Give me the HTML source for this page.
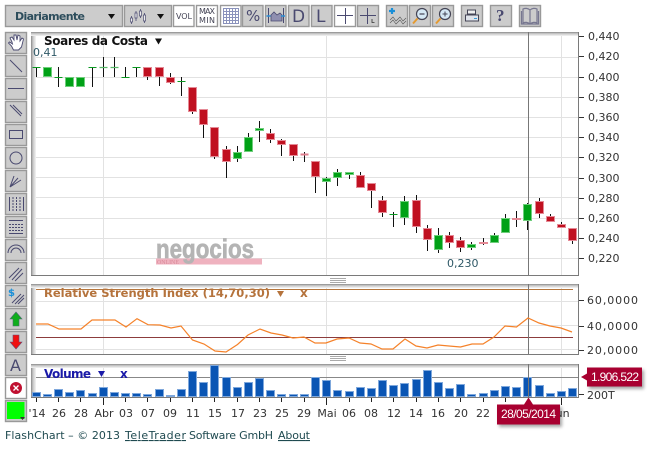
<!DOCTYPE html>
<html><head><meta charset="utf-8"><style>
html,body{margin:0;padding:0;background:#fff;width:650px;height:449px;overflow:hidden}
svg{display:block}
text{font-family:"DejaVu Sans","Liberation Sans",sans-serif;font-size:11px;fill:#333}
.b{fill:#ccc;stroke:#999;stroke-width:1.4}
.w{fill:#fff;stroke:#999;stroke-width:1.4}
.i{fill:none;stroke:#4a4a70;stroke-width:1}
</style></head><body>
<svg width="650" height="449" viewBox="0 0 650 449" xmlns="http://www.w3.org/2000/svg">
<defs>
<linearGradient id="gl" x1="0" x2="1" y1="0" y2="0"><stop offset="0" stop-color="#888"/><stop offset=".4" stop-color="#c8c8c8"/><stop offset="1" stop-color="#f4f4f4"/></linearGradient>
<linearGradient id="gt" x1="0" x2="0" y1="0" y2="1"><stop offset="0" stop-color="#888"/><stop offset=".4" stop-color="#c8c8c8"/><stop offset="1" stop-color="#f4f4f4"/></linearGradient>
<filter id="sh" x="-20%" y="-30%" width="140%" height="170%"><feGaussianBlur stdDeviation="1.5"/></filter>
</defs>

<!-- top toolbar -->
<rect class="b" x="5.500" y="5.500" width="117" height="21"/>
<text x="15" y="20" style="font-weight:bold;fill:#2d4d5c" textLength="70">Diariamente</text>
<path d="M108 14h7l-3.500 5z" fill="#111"/>
<rect class="b" x="124.500" y="5.500" width="47" height="21"/>
<path d="M131.500 16v8M136 11v10M140.500 9v9M144.500 13v10" stroke="#4a4a70" stroke-width=".8" fill="none"/>
<path d="M130.500 18h2v4h-2zM135 13h2v5h-2zM139.500 11h2v5h-2zM143.500 15h2v6h-2z" fill="#eee" stroke="#4a4a70" stroke-width=".7"/>
<path d="M157 14h7l-3.500 5z" fill="#111"/>
<rect class="w" x="173.500" y="5.500" width="20.500" height="21"/>
<text x="176" y="19" style="font-size:8px;fill:#445" textLength="16">VOL</text>
<rect class="w" x="196.500" y="5.500" width="21" height="21"/>
<text x="199" y="14" style="font-size:8px;fill:#445" textLength="16">MAX</text>
<text x="199" y="23" style="font-size:8px;fill:#445" textLength="16">MIN</text>
<rect class="w" x="220.500" y="5.500" width="20.500" height="21"/>
<path d="M223.500 8.500h15v15h-15zM226.500 8.500v15M229.500 8.500v15M232.500 8.500v15M235.500 8.500v15M223.500 11.500h15M223.500 14.500h15M223.500 17.500h15M223.500 20.500h15" fill="none" stroke="#8a92bc" stroke-width="1"/>
<rect class="b" x="242.500" y="5.500" width="20.500" height="21"/>
<text x="246" y="21" style="font-size:15px;fill:#4a4a70">%</text>
<rect class="b" x="265.500" y="5.500" width="20.500" height="21"/>
<path d="M271 21v-6l3 -3 3 3 3 -2 2 2v6z" fill="#8f8fb0" stroke="#4a4a70" stroke-width=".8"/>
<path d="M268.500 8v15M283.500 8v15" stroke="#4a4a70" stroke-width="1" fill="none"/>
<path d="M266.500 16h4M281 16h4" stroke="#2a8fd8" stroke-width="1.400" fill="none"/>
<rect class="b" x="288.500" y="5.500" width="20.500" height="21"/>
<text x="292" y="22" style="font-size:17px;fill:#4a4a70">D</text>
<rect class="b" x="311.500" y="5.500" width="20.500" height="21"/>
<text x="316" y="22" style="font-size:17px;fill:#4a4a70">L</text>
<rect class="w" x="334.500" y="5.500" width="21" height="21"/>
<path d="M345.500 8v16M337 15.500h16" stroke="#4a4a70" stroke-width="1" fill="none"/>
<rect class="b" x="357.500" y="5.500" width="21" height="21"/>
<path d="M367.500 8v16M360 15.500h16" stroke="#4a4a70" stroke-width="1" fill="none"/>
<path d="M372 19v3.500h2.500" stroke="#333" stroke-width=".8" fill="none"/>
<rect class="b" x="386.500" y="5.500" width="21" height="21"/>
<path d="M392 8v6M389 11h6" stroke="#1a8fd8" stroke-width="2.200" fill="none"/>
<path d="M390 20l3 -3 3 4 4 -4 3 4 3 -3M390 23l3 -3 3 4 4 -4 3 4 3 -3" stroke="#555" stroke-width=".6" fill="none"/>
<rect class="b" x="409.500" y="5.500" width="21" height="21"/>
<circle cx="422" cy="14" r="5.500" fill="#d5e8f5" stroke="#445" stroke-width="1.200"/>
<path d="M419.500 14h5" stroke="#445" stroke-width="1.200"/>
<path d="M417.500 18.500l-4.500 5" stroke="#e59a30" stroke-width="2"/>
<rect class="b" x="432.500" y="5.500" width="21" height="21"/>
<circle cx="445" cy="14" r="5.500" fill="#d5e8f5" stroke="#445" stroke-width="1.200"/>
<path d="M442.500 14h5M445 11.500v5" stroke="#445" stroke-width="1"/>
<path d="M440.500 18.500l-4.500 5" stroke="#e59a30" stroke-width="2"/>
<rect class="b" x="461.500" y="5.500" width="21" height="21"/>
<path d="M467.500 10h8v4h-8z" fill="#eee" stroke="#445"/>
<path d="M465.500 15h13v6h-13z" fill="#dfe3ea" stroke="#445"/>
<path d="M474 18.500h3" stroke="#3a9bd8" stroke-width="1"/>
<rect class="b" x="490.500" y="5.500" width="21" height="21"/>
<text x="496" y="21" style="font-family:'Liberation Serif',serif;font-size:17px;font-weight:bold;fill:#4a4a70">?</text>
<rect class="b" x="519.500" y="5.500" width="21" height="21"/>
<path d="M523 9c2 -1 5 -1 7 1c2 -2 5 -2 7 -1v14c-2 -1 -5 -1 -7 1c-2 -2 -5 -2 -7 -1zM530 10v14M521.500 11v13h17v-13" fill="none" stroke="#777790" stroke-width="1.200"/>

<!-- left toolbar -->
<rect class="b" x="5.500" y="32.500" width="21" height="21"/>
<path d="M12 42l-2 -4 2 -1 2 3 0 -5 2 0 1 5 1 -5 2 1 0 5 2 -3 1.500 1 -2 8 -3 3h-5l-2 -4 -3 -3 1 -1 3 2z" fill="#fff" stroke="#4a4a70" stroke-width=".9"/>
<rect class="b" x="5.500" y="55.500" width="21" height="21"/>
<path class="i" d="M10 60l12 12"/>
<rect class="b" x="5.500" y="78.500" width="21" height="21"/>
<path class="i" d="M8 88.500h16"/>
<rect class="b" x="5.500" y="101.500" width="21" height="21"/>
<path class="i" d="M10 105l11 11M13 105l9 9"/>
<rect class="b" x="5.500" y="124.500" width="21" height="21"/>
<path class="i" d="M9.500 130.500h13v8h-13z" stroke-width="1"/>
<rect class="b" x="5.500" y="147.500" width="21" height="21"/>
<circle class="i" cx="16" cy="158" r="6"/>
<rect class="b" x="5.500" y="170.500" width="21" height="21"/>
<path class="i" d="M10 187l4 -11M10 187l8 -9M10 187l11 -7" stroke-width="1.200"/>
<rect class="b" x="5.500" y="193.500" width="21" height="21"/>
<path class="i" d="M9.500 197v14M23.500 197v14"/>
<path class="i" d="M13 197v14M16.500 197v14M20 197v14" stroke-dasharray="2 1"/>
<rect class="b" x="5.500" y="216.500" width="21" height="21"/>
<path class="i" d="M9 220.500h14M9 233.500h14"/>
<path class="i" d="M9 224.500h14M9 227.500h14M9 230.500h14" stroke-dasharray="2 1"/>
<rect class="b" x="5.500" y="239.500" width="21" height="21"/>
<path class="i" d="M8 253a8 8 0 0 1 16 0M11 253a5 5 0 0 1 10 0"/>
<rect class="b" x="5.500" y="262.500" width="21" height="21"/>
<path class="i" d="M9 278l10 -10M12 280l10 -11M15 281l8 -8"/>
<rect class="b" x="5.500" y="285.500" width="21" height="21"/>
<text x="8" y="296" style="font-size:10px;font-weight:bold;fill:#1a8fd8">$</text>
<path class="i" d="M12 303l9 -9M15 304l9 -9M18 304l6 -6"/>
<rect class="b" x="5.500" y="308.500" width="21" height="21"/>
<path d="M16 312l6 7h-3v7h-6v-7h-3z" fill="#0fae1c" stroke="#4a6a70" stroke-width=".6"/>
<rect class="b" x="5.500" y="331.500" width="21" height="21"/>
<path d="M16 349l6 -7h-3v-7h-6v7h-3z" fill="#f01010" stroke="#6a4a70" stroke-width=".6"/>
<rect class="b" x="5.500" y="354.500" width="21" height="21"/>
<text x="10" y="371" style="font-size:16px;fill:#4a4a70">A</text>
<rect class="w" x="5.500" y="377.500" width="21" height="21"/>
<circle cx="16" cy="388" r="6" fill="#c01030"/>
<path d="M13.500 385.500l5 5M18.500 385.500l-5 5" stroke="#fff" stroke-width="1.400"/>
<rect class="b" x="5.500" y="400.500" width="21" height="21"/>
<rect x="7" y="402" width="17.500" height="17" fill="#00ff00"/>
<path d="M20 417h5l-2.500 3z" fill="#333"/>

<!-- main panel -->
<path d="M31 57.500H578M31 77.500H578M31 97.500H578M31 117.500H578M31 137.500H578M31 157.500H578M31 177.500H578M31 197.500H578M31 218.500H578M31 238.500H578M31 258.500H578M103.500 32V275M326.500 32V275M561.500 32V275" stroke="#e2e2e2" stroke-width="1" fill="none"/>
<rect x="31" y="32" width="5" height="243" fill="url(#gl)"/>
<rect x="31" y="32" width="547" height="4" fill="url(#gt)"/>
<path d="M31 275.500H578.500V32" stroke="#7a7a7a" stroke-width="1" fill="none"/>
<path d="M528.500 32V275" stroke="#777" fill="none"/>

<!-- logo -->
<rect x="156" y="258.500" width="106" height="6" fill="#efb2bf"/>
<text x="156" y="258" lengthAdjust="spacingAndGlyphs" textLength="98" style="font-family:'Liberation Sans',sans-serif;font-size:26.500px;font-weight:bold;fill:#b4b4b4;stroke:#b4b4b4;stroke-width:.7">negocios</text>
<text x="157" y="264" style="font-family:'Liberation Serif',serif;font-size:6px;fill:#d98a9a" textLength="22">ONLINE</text>

<!-- wicks -->
<path d="M36.500 67V77M58.500 67V87M92.500 67V87M103.500 57V77M114.500 57V77M125.500 67V77M136.500 67V77M147.500 67V80M159.500 67V86M170.500 73V84M181.500 77V96M192.500 87V114M203.500 109V138M214.500 127V159M226.500 146V178M237.500 146V162M248.500 133V152M259.500 121V142M270.500 129V143M281.500 139V156M293.500 144V161M304.500 152V162M315.500 161V193M326.500 177V196M337.500 169V186M349.500 172V179M360.500 172V188M371.500 183V208M382.500 196V217M393.500 212V227M404.500 196V225M416.500 195V233M427.500 225V251M438.500 228V253M449.500 232V248M460.500 237V252M471.500 242V250M483.500 238V245M494.500 233V243M505.500 214V233M516.500 211V227M527.500 203V230M539.500 198V218M550.500 214V222M561.500 222V228M572.500 228V244" stroke="#111" stroke-width="1" fill="none"/>
<!-- dojis -->
<path d="M32.500 67.500h8M54.500 77.500h8M88.500 67.500h8M121.500 77.500h8M132.500 67.500h8M177.500 81.500h8M389.500 214.500h8" stroke="#0a9a20" stroke-width="1" fill="none"/>
<path d="M99.500 67.500h8M110.500 67.500h8" stroke="#58b868" stroke-width="1.200" fill="none"/>
<path d="M300.500 154.500h8" stroke="#e07f8f" stroke-width="2" fill="none"/>
<!-- green bodies -->
<path d="M43.500 67.500h8v9h-8zM65.500 77.500h8v9h-8zM76.500 77.500h8v9h-8zM233.500 152.500h8v6h-8zM244.500 137.500h8v14h-8zM255.500 128.500h8v2h-8zM322.500 178.500h8v3h-8zM333.500 172.500h8v5h-8zM345.500 172.500h8v2h-8zM400.500 201.500h8v16h-8zM434.500 235.500h8v14h-8zM467.500 244.500h8v3h-8zM490.500 235.500h8v7h-8zM501.500 218.500h8v14h-8zM523.500 204.500h8v16h-8z" fill="#00a116" stroke="#6fce7c" stroke-width="1"/>
<!-- red bodies -->
<path d="M143.500 67.500h8v9h-8zM155.500 67.500h8v9h-8zM166.500 77.500h8v5h-8zM188.500 87.500h8v24h-8zM199.500 109.500h8v15h-8zM210.500 127.500h8v29h-8zM222.500 149.500h8v12h-8zM266.500 133.500h8v6h-8zM277.500 140.500h8v4h-8zM289.500 144.500h8v11h-8zM311.500 161.500h8v15h-8zM356.500 175.500h8v12h-8zM367.500 183.500h8v7h-8zM378.500 200.500h8v12h-8zM412.500 200.500h8v26h-8zM423.500 228.500h8v11h-8zM445.500 235.500h8v7h-8zM456.500 240.500h8v7h-8zM479.500 242.500h8v1h-8zM512.500 218.500h8v1h-8zM535.500 201.500h8v12h-8zM546.500 216.500h8v5h-8zM557.500 224.500h8v3h-8zM568.500 228.500h8v12h-8z" fill="#c01020" stroke="#e58a96" stroke-width="1"/>

<text x="44" y="45" style="font-size:12px;font-weight:bold;fill:#111" textLength="104">Soares da Costa</text>
<path d="M155 38.500h7l-3.500 6z" fill="#111"/>
<text x="33" y="56" style="fill:#2e5866;font-size:11px">0,41</text>
<text x="447" y="267" style="fill:#2e5866;font-size:11px">0,230</text>

<!-- right axis main -->
<path d="M579 36.500h5M579 56.500h5M579 77.500h5M579 97.500h5M579 117.500h5M579 137.500h5M579 157.500h5M579 178.500h5M579 198.500h5M579 218.500h5M579 238.500h5M579 258.500h5M579 300.500h5M579 326.500h5M579 350.500h5M579 394.500h5" stroke="#333" fill="none"/>
<text x="588" y="40">0,440</text><text x="588" y="60">0,420</text><text x="588" y="81">0,400</text><text x="588" y="101">0,380</text><text x="588" y="121">0,360</text><text x="588" y="141">0,340</text><text x="588" y="161">0,320</text><text x="588" y="182">0,300</text><text x="588" y="202">0,280</text><text x="588" y="222">0,260</text><text x="588" y="242">0,240</text><text x="588" y="262">0,220</text>

<!-- resize handles -->
<path d="M330 278.500h16M330 280.500h16M330 282.500h16M330 356.500h16M330 358.500h16M330 360.500h16" stroke="#aaa" fill="none"/>

<!-- RSI panel -->
<path d="M31 301.500H578M31 325.500H578M31 349.500H578M103.500 284V354M326.500 284V354M561.500 284V354" stroke="#e2e2e2" fill="none"/>
<rect x="31" y="284" width="5" height="70" fill="url(#gl)"/>
<rect x="31" y="284" width="547" height="4" fill="url(#gt)"/>
<path d="M31 354.500H578.500V284" stroke="#7a7a7a" fill="none"/>
<path d="M36 289.500H573" stroke="#b5763d" fill="none"/>
<path d="M36 337.500H573" stroke="#8c3c3c" fill="none"/>
<path d="M528.500 284V354" stroke="#777" fill="none"/>
<path d="M36 324L48 324 59 329 70 329 81 329 92 320 103.500 320 115 320 126 327 137 318.700 148 324.700 160 325 171 328 181 326 192.500 340 204 344 215 351 226 352 237.500 344.500 248 335 260 329 271 333 282 335 293 338 304 337 315 343 326 343 337 339 349 338 360 343 371 344 382 349 393 349 405 339 416 346 427 348 438 345 449 346 460.500 347 472 344 483 344 494 337 505 326 516.500 327 528 318 539 323 550 326 561 328 572 332" fill="none" stroke="#f5822a" stroke-width="1.200"/>
<text x="44" y="297" style="font-weight:bold;font-size:11.500px;fill:#b5733c" textLength="226">Relative Strength Index (14,70,30)</text>
<path d="M277 291h7l-3.500 6z" fill="#b5733c"/>
<text x="300" y="297" style="font-weight:bold;font-size:12px;fill:#b5733c">x</text>
<text x="587" y="304" textLength="51">60,0000</text><text x="587" y="330" textLength="51">40,0000</text><text x="587" y="354" textLength="51">20,0000</text>

<!-- Volume panel -->
<path d="M103.500 364V396M326.500 364V396M561.500 364V396" stroke="#e2e2e2" fill="none"/>
<rect x="31" y="364" width="5" height="33" fill="url(#gl)"/>
<rect x="31" y="364" width="547" height="4" fill="url(#gt)"/>
<path d="M36 377.500H578" stroke="#888" fill="none"/>
<path d="M32.500 392.500h8v4h-8zM43.500 394.500h8v2h-8zM54.500 389.500h8v7h-8zM65.500 392.500h8v4h-8zM76.500 390.500h8v6h-8zM88.500 393.500h8v3h-8zM99.500 387.500h8v9h-8zM110.500 392.500h8v4h-8zM121.500 393.500h8v3h-8zM132.500 393.500h8v3h-8zM143.500 394.500h8v2h-8zM155.500 389.500h8v7h-8zM166.500 395.500h8v1h-8zM177.500 389.500h8v7h-8zM188.500 371.500h8v25h-8zM199.500 382.500h8v14h-8zM210.500 365.500h8v31h-8zM222.500 377.500h8v19h-8zM233.500 387.500h8v9h-8zM244.500 382.500h8v14h-8zM255.500 378.500h8v18h-8zM266.500 390.500h8v6h-8zM277.500 394.500h8v2h-8zM289.500 394.500h8v2h-8zM300.500 394.500h8v2h-8zM311.500 377.500h8v19h-8zM322.500 380.500h8v16h-8zM333.500 390.500h8v6h-8zM345.500 391.500h8v5h-8zM356.500 387.500h8v9h-8zM367.500 388.500h8v8h-8zM378.500 380.500h8v16h-8zM389.500 385.500h8v11h-8zM400.500 383.500h8v13h-8zM412.500 379.500h8v17h-8zM423.500 370.500h8v26h-8zM434.500 382.500h8v14h-8zM445.500 388.500h8v8h-8zM456.500 384.500h8v12h-8zM467.500 394.500h8v2h-8zM479.500 393.500h8v3h-8zM490.500 390.500h8v6h-8zM501.500 386.500h8v10h-8zM512.500 387.500h8v9h-8zM523.500 377.500h8v19h-8zM535.500 385.500h8v11h-8zM546.500 393.500h8v3h-8zM557.500 391.500h8v5h-8zM568.500 388.500h8v8h-8z" fill="#0a55b4" stroke="#7fa8dc" stroke-width="1"/>
<path d="M31 397.500H578.500V364" stroke="#7a7a7a" fill="none"/>
<path d="M528.500 364V397" stroke="#777" fill="none"/>
<text x="44" y="378" style="font-weight:bold;font-size:12px;fill:#1a1aa8" textLength="47">Volume</text>
<path d="M98 371h7l-3.500 6z" fill="#1a1aa8"/>
<text x="120" y="378" style="font-weight:bold;font-size:12px;fill:#1a1aa8">x</text>
<text x="587" y="399">200T</text>

<!-- x axis -->
<path d="M36.500 398v4M58.500 398v4M80.500 398v4M125.500 398v4M147.500 398v4M170.500 398v4M192.500 398v4M214.500 398v4M237.500 398v4M259.500 398v4M281.500 398v4M304.500 398v4M349.500 398v4M371.500 398v4M393.500 398v4M416.500 398v4M438.500 398v4M460.500 398v4M483.500 398v4M505.500 398v4M103.500 398v7M326.500 398v7M561.500 398v7" stroke="#222" fill="none"/>
<g text-anchor="middle">
<text x="37" y="417">'14</text><text x="59" y="417">26</text><text x="81" y="417">28</text><text x="104" y="417">Abr</text><text x="126" y="417">03</text><text x="148" y="417">07</text><text x="170" y="417">09</text><text x="193" y="417">11</text><text x="215" y="417">15</text><text x="238" y="417">17</text><text x="260" y="417">23</text><text x="282" y="417">25</text><text x="304" y="417">29</text><text x="327" y="417">Mai</text><text x="349" y="417">06</text><text x="371" y="417">08</text><text x="394" y="417">12</text><text x="416" y="417">14</text><text x="438" y="417">16</text><text x="461" y="417">20</text><text x="483" y="417">22</text><text x="561" y="417">Jun</text>
</g>

<!-- tooltips -->
<path d="M589 370h55v19h-55zM499 407h63v20h-63z" fill="#000" opacity=".35" filter="url(#sh)"/>
<path d="M587 367.500h55v19h-55v-6l-6 -3.500 6 -3.500z" fill="#a80030"/>
<text x="591" y="381" style="font-family:'Liberation Sans',sans-serif;font-size:12px;fill:#fff" textLength="48">1.906.522</text>
<path d="M497 404.500h27l4.500 -7 4.500 7h27v20h-63z" fill="#a80030"/>
<text x="501" y="418" style="font-family:'Liberation Sans',sans-serif;font-size:12px;fill:#fff" textLength="55">28/05/2014</text>

<!-- footer -->
<g style="fill:#1f4a50">
<text x="5" y="439" style="fill:#1f4a50" textLength="115">FlashChart – © 2013</text>
<text x="125" y="439" style="fill:#1f4a50;text-decoration:underline" textLength="61">TeleTrader</text>
<text x="189" y="439" style="fill:#1f4a50" textLength="84">Software GmbH</text>
<text x="278" y="439" style="fill:#1f4a50;text-decoration:underline" textLength="32">About</text>
</g>
</svg>
</body></html>
